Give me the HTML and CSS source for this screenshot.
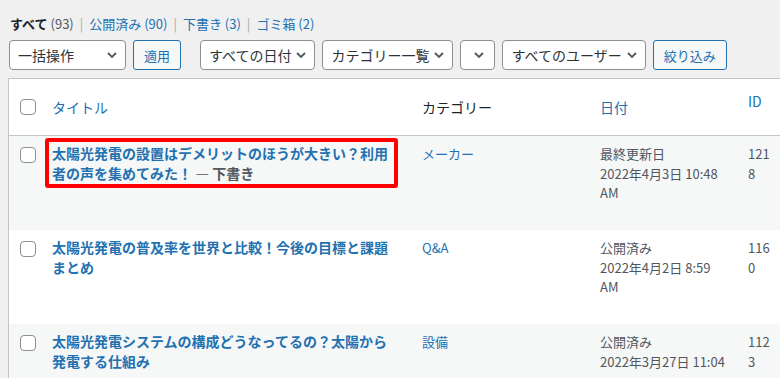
FILE: index.html
```html
<!DOCTYPE html>
<html lang="ja">
<head>
    <meta charset="UTF-8">
    <meta name="viewport" content="width=device-width, initial-scale=1.0">
    <title>投稿一覧</title>
    <link rel="stylesheet" href="styles.css">
</head>
<body>
    <div class="wrap">
        <ul class="status">
            <li><a class="current">すべて <span class="count">(93)</span></a><span class="sep">|</span></li>
            <li><a>公開済み <span class="count">(90)</span></a><span class="sep">|</span></li>
            <li><a>下書き <span class="count">(3)</span></a><span class="sep">|</span></li>
            <li><a>ゴミ箱 <span class="count">(2)</span></a></li>
        </ul>

        <div class="tablenav">
            <div class="actions">
                <div class="select bulk">一括操作<svg viewBox="0 0 10 6"><path d="M1 1l4 4 4-4"/></svg></div>
                <button class="button">適用</button>
            </div>
            <div class="actions">
                <div class="select">すべての日付<svg viewBox="0 0 10 6"><path d="M1 1l4 4 4-4"/></svg></div>
                <div class="select">カテゴリー一覧<svg viewBox="0 0 10 6"><path d="M1 1l4 4 4-4"/></svg></div>
                <div class="select empty"><svg viewBox="0 0 10 6"><path d="M1 1l4 4 4-4"/></svg></div>
                <div class="select">すべてのユーザー<svg viewBox="0 0 10 6"><path d="M1 1l4 4 4-4"/></svg></div>
                <button class="button">絞り込み</button>
            </div>
        </div>

        <table class="posts">
            <thead>
                <tr>
                    <th class="check"><input type="checkbox"></th>
                    <th class="col-title"><a>タイトル</a></th>
                    <th class="col-cat">カテゴリー</th>
                    <th class="col-date"><a>日付</a></th>
                    <th class="col-id"><a>ID</a></th>
                </tr>
            </thead>
            <tbody>
                <tr class="alt">
                    <td class="check"><input type="checkbox"></td>
                    <td>
                        <div class="title-wrap">
                            <strong><a>太陽光発電の設置はデメリットのほうが大きい？利用者の声を集めてみた！</a><span class="state"> — 下書き</span></strong>
                            <span class="highlight"></span>
                        </div>
                    </td>
                    <td><a>メーカー</a></td>
                    <td class="date">最終更新日<br>2022年4月3日 10:48<br>AM</td>
                    <td class="id">1218</td>
                </tr>
                <tr>
                    <td class="check"><input type="checkbox"></td>
                    <td><strong><a>太陽光発電の普及率を世界と比較！今後の目標と課題まとめ</a></strong></td>
                    <td><a>Q&amp;A</a></td>
                    <td class="date">公開済み<br>2022年4月2日 8:59<br>AM</td>
                    <td class="id">1160</td>
                </tr>
                <tr class="alt">
                    <td class="check"><input type="checkbox"></td>
                    <td><strong><a>太陽光発電システムの構成どうなってるの？太陽から発電する仕組み</a></strong></td>
                    <td><a>設備</a></td>
                    <td class="date">公開済み<br>2022年3月27日 11:04</td>
                    <td class="id">1123</td>
                </tr>
            </tbody>
        </table>
    </div>
</body>
</html>
```

FILE: styles.css
```css
* {
    box-sizing: border-box;
}
html, body {
    margin: 0;
    overflow: hidden;
}
body {
    font-family: "Noto Sans CJK JP", "Noto Sans", sans-serif;
    font-size: 13px;
    background-color: #f0f0f1;
    color: #3c434a;
}
a {
    color: #2271b1;
    text-decoration: none;
}
.wrap {
    padding-left: 8px;
}
.status {
    list-style: none;
    margin: 0;
    padding: 14px 0 0 2px;
    display: flex;
    line-height: 20px;
}
.status .current {
    color: #1d2327;
    font-weight: 700;
}
.status .current .count {
    color: #50575e;
    font-weight: 400;
}
.status .sep {
    color: #a7aaad;
    margin: 0 6px;
}
.tablenav {
    display: flex;
    gap: 19px;
    margin: 6px 0 8px 1px;
}
.actions {
    display: flex;
    gap: 7px;
}
.select {
    display: flex;
    align-items: center;
    height: 30px;
    padding: 0 8px;
    border: 1px solid #8c8f94;
    border-radius: 4px;
    background: #fff;
    color: #2c3338;
    font-size: 14px;
}
.select svg {
    width: 10px;
    height: 6px;
    margin-left: 5px;
    fill: none;
    stroke: #50575e;
    stroke-width: 1.8;
}
.select.bulk {
    width: 117px;
}
.select.bulk svg {
    margin-left: auto;
}
.select.empty {
    width: 35px;
    padding-left: 13px;
}
.select.empty svg {
    margin-left: 0;
}
.button {
    height: 30px;
    padding: 0 10px;
    border: 1px solid #2271b1;
    border-radius: 3px;
    background: #f6f7f7;
    color: #2271b1;
    font-family: inherit;
    font-size: 13px;
}
.posts {
    width: 778px;
    table-layout: fixed;
    border-spacing: 0;
    border: 1px solid #c3c4c7;
    background: #fff;
}
.posts th {
    height: 57px;
    padding: 0 8px;
    border-bottom: 1px solid #c3c4c7;
    text-align: left;
    font-weight: 400;
    font-size: 14px;
    line-height: 20px;
    color: #1d2327;
    vertical-align: middle;
}
.posts th.check {
    width: 35px;
    padding: 0 0 0 11px;
}
.posts th.col-title {
    width: 370px;
}
.posts th.col-cat {
    width: 178px;
}
.posts th.col-date {
    width: 148px;
}
.posts th.col-id {
    vertical-align: top;
    padding-top: 12px;
}
.posts td {
    height: 94px;
    padding: 8px 22px 0 8px;
    vertical-align: top;
    line-height: 19.5px;
}
.posts tr.alt td {
    background: #f6f7f7;
}
.posts td.check {
    padding: 11px 0 0 11px;
}
.posts td.date {
    padding-right: 8px;
    color: #50575e;
}
.posts td.id {
    padding-right: 12px;
    word-break: break-all;
    color: #50575e;
}
input[type="checkbox"] {
    appearance: none;
    display: block;
    margin: 0;
    width: 16px;
    height: 16px;
    border: 1px solid #8c8f94;
    border-radius: 4px;
    background: #fff;
}
.posts strong {
    display: block;
    font-size: 14px;
    line-height: 19.5px;
    font-weight: 700;
}
.posts .state {
    color: #50575e;
}
.title-wrap {
    position: relative;
}
.highlight {
    position: absolute;
    left: -7px;
    top: -6px;
    width: 353px;
    height: 50px;
    border: 4px solid #ff0000;
    border-radius: 3px;
}
```
